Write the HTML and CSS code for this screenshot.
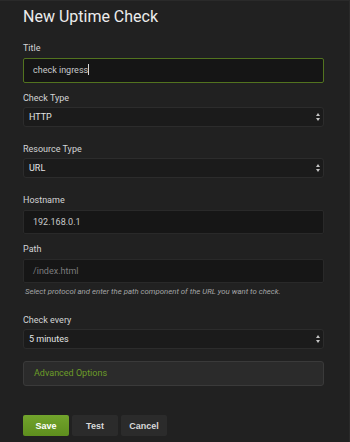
FILE: index.html
```html
<!DOCTYPE html>
<html lang="en">
<head>
    <meta charset="UTF-8">
    <meta name="viewport" content="width=device-width, initial-scale=1.0">
    <title>New Uptime Check</title>
    <link rel="stylesheet" href="styles.css">
</head>
<body>
    <div class="page">
        <h1>New Uptime Check</h1>

        <div class="field">
            <label>Title</label>
            <div class="input focused">check ingress<span class="caret"></span></div>
        </div>

        <div class="field select-field">
            <label>Check Type</label>
            <div class="select">HTTP<span class="arrows"></span></div>
        </div>

        <div class="field select-field">
            <label>Resource Type</label>
            <div class="select">URL<span class="arrows"></span></div>
        </div>

        <div class="field">
            <label>Hostname</label>
            <div class="input">192.168.0.1</div>
        </div>

        <div class="field help-field">
            <label>Path</label>
            <div class="input placeholder">/index.html</div>
            <div class="help">Select protocol and enter the path component of the URL you want to check.</div>
        </div>

        <div class="field select-field last">
            <label>Check every</label>
            <div class="select">5 minutes<span class="arrows"></span></div>
        </div>

        <div class="advanced">Advanced Options</div>

        <div class="actions">
            <button class="btn primary">Save</button>
            <button class="btn">Test</button>
            <button class="btn">Cancel</button>
        </div>
    </div>
</body>
</html>
```

FILE: styles.css
```css
html, body {
    margin: 0;
    height: 100%;
}
body {
    background: #212121;
    color: #d8d9da;
    font-family: Roboto, "Liberation Sans", sans-serif;
    border-top: 1px solid #2a2a2a;
    border-right: 1px solid #2a2a2a;
    box-sizing: border-box;
    overflow: hidden;
}
.page {
    width: 301px;
    padding: 5px 0 0 23px;
}
h1 {
    margin: 0 0 13px;
    font-size: 16px;
    font-weight: 400;
    color: #ececec;
    line-height: 22px;
}
.field {
    margin-bottom: 8px;
}
.select-field {
    margin-bottom: 15px;
}
.select-field label {
    margin-bottom: 2px;
}
.help-field {
    margin-bottom: 16px;
}
.select-field.last {
    margin-bottom: 12px;
}
label {
    display: block;
    font-size: 9px;
    line-height: 14px;
    margin-bottom: 3px;
    color: #d3d4d5;
}
.input {
    height: 24px;
    box-sizing: border-box;
    background: #161616;
    border: 1px solid #292929;
    border-radius: 2px;
    padding: 0 9px;
    font-size: 9px;
    line-height: 22px;
    color: #c8c9ca;
}
.input.focused {
    height: 25px;
    line-height: 23px;
    border: 1px solid #52731f;
    background: #151515;
}
.input.placeholder {
    color: #7b7c7d;
}
.caret {
    display: inline-block;
    width: 1px;
    height: 11px;
    background: #d8d9da;
    vertical-align: -2px;
}
.select {
    position: relative;
    height: 20px;
    box-sizing: border-box;
    background: #1b1b1b;
    border: 1px solid #2c2c2c;
    border-radius: 3px;
    padding: 0 5px;
    font-size: 9px;
    line-height: 18px;
    color: #e2e3e4;
}
.arrows {
    position: absolute;
    right: 5px;
    top: 5px;
    width: 0;
    height: 8px;
}
.arrows::before, .arrows::after {
    content: "";
    position: absolute;
    left: -2px;
    border-left: 2px solid transparent;
    border-right: 2px solid transparent;
}
.arrows::before {
    top: 0;
    border-bottom: 3px solid #c4c4c4;
}
.arrows::after {
    bottom: 0;
    border-top: 3px solid #c4c4c4;
}
.help {
    margin-top: 3px;
    font-size: 7.8px;
    line-height: 11px;
    font-style: italic;
    color: #a4a5a6;
    padding-left: 2px;
}
.advanced {
    height: 25px;
    box-sizing: border-box;
    background: #2b2b2b;
    border: 1px solid #3a3a3a;
    border-radius: 3px;
    padding: 0 10px;
    font-size: 9px;
    line-height: 23px;
    color: #6c9d29;
}
.actions {
    display: flex;
    gap: 3px;
    margin-top: 29px;
}
.btn {
    width: 46px;
    height: 21px;
    border: none;
    border-radius: 2px;
    background: #2b2b2b;
    color: #d8d9da;
    font-family: "Liberation Sans", Arial, sans-serif;
    font-size: 9px;
    font-weight: 700;
    padding: 0;
}
.btn.primary {
    background: linear-gradient(#72a42c, #5e8e1e);
    color: #fff;
}
```
